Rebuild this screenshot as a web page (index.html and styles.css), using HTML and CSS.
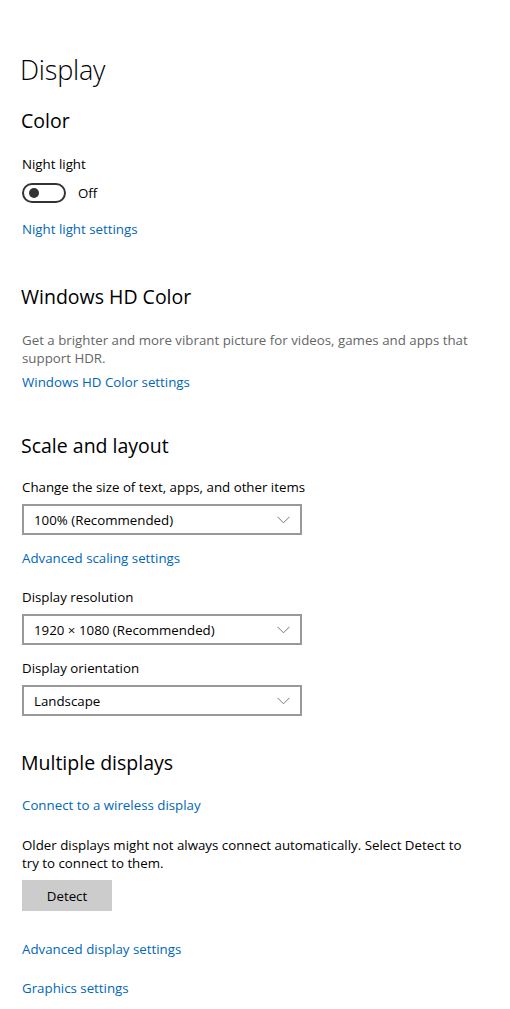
FILE: index.html
```html
<!DOCTYPE html>
<html lang="en">
<head>
    <meta charset="UTF-8">
    <meta name="viewport" content="width=device-width, initial-scale=1.0">
    <title>Display</title>
    <link rel="stylesheet" href="styles.css">
</head>
<body>
    <h1 class="page-title">Display</h1>

    <section class="group">
        <h2>Color</h2>
        <div class="label">Night light</div>
        <div class="toggle-row">
            <span class="toggle"><span class="knob"></span></span>
            <span class="toggle-state">Off</span>
        </div>
        <a class="link first-link" href="#">Night light settings</a>
    </section>

    <section class="group hd">
        <h2>Windows HD Color</h2>
        <p class="desc">Get a brighter and more vibrant picture for videos, games and apps that support HDR.</p>
        <a class="link" href="#">Windows HD Color settings</a>
    </section>

    <section class="group scale">
        <h2>Scale and layout</h2>
        <div class="label">Change the size of text, apps, and other items</div>
        <div class="select"><span>100% (Recommended)</span><svg width="13" height="8" viewBox="0 0 13 8"><path d="M0.5 0.8 L6.5 6.8 L12.5 0.8" fill="none" stroke="#777" stroke-width="1"/></svg></div>
        <a class="link after-select" href="#">Advanced scaling settings</a>
        <div class="label spaced">Display resolution</div>
        <div class="select"><span>1920 × 1080 (Recommended)</span><svg width="13" height="8" viewBox="0 0 13 8"><path d="M0.5 0.8 L6.5 6.8 L12.5 0.8" fill="none" stroke="#777" stroke-width="1"/></svg></div>
        <div class="label tight">Display orientation</div>
        <div class="select"><span>Landscape</span><svg width="13" height="8" viewBox="0 0 13 8"><path d="M0.5 0.8 L6.5 6.8 L12.5 0.8" fill="none" stroke="#777" stroke-width="1"/></svg></div>
    </section>

    <section class="group multi">
        <h2>Multiple displays</h2>
        <a class="link" href="#">Connect to a wireless display</a>
        <p class="note">Older displays might not always connect automatically. Select Detect to try to connect to them.</p>
        <button class="btn" type="button">Detect</button>
        <a class="link block-link" href="#">Advanced display settings</a>
        <a class="link block-link graphics" href="#">Graphics settings</a>
    </section>
</body>
</html>
```

FILE: styles.css
```css
body { margin: 0; padding: 0 0 0 22px; font-family: "Open Sans", "Noto Sans", sans-serif; font-size: 13.3px; color: #000; background: #fff; }
h1, h2, p { margin: 0; font-weight: 400; }
.page-title { font-size: 27px; font-weight: 300; margin: 52px 0 0 -2px; line-height: 36px; letter-spacing: -0.2px; }
h2 { font-size: 19.5px; line-height: 26px; margin-left: -1px; }
.group { margin-top: 20px; }
.label { margin-top: 21px; line-height: 18px; }
.toggle-row { display: flex; align-items: center; gap: 12px; margin-top: 10px; }
.toggle { height: 16px; border: 2px solid #333; border-radius: 10px; display: flex; align-items: center; padding-left: 5px; box-sizing: content-box; width: 35px; }
.knob { width: 10px; height: 10px; border-radius: 50%; background: #333; }
.toggle-state { line-height: 18px; }
.link { display: block; color: #0067b8; text-decoration: none; line-height: 18px; width: max-content; }
.first-link { margin-top: 17px; }
.hd { margin-top: 46px; }
.desc { color: #666; line-height: 18px; margin-top: 21px; padding-right: 30px; }
.hd .link { margin-top: 6px; }
.scale { margin-top: 42px; }
.scale .label { margin-top: 19px; }
.select { height: 27px; border: 2px solid #999; margin-top: 8px; display: flex; align-items: center; justify-content: space-between; padding: 0 10px; box-sizing: content-box; width: 256px; }
.select span { line-height: 18px; }
.after-select { margin-top: 14px; }
.scale .label.spaced { margin-top: 21px; }
.scale .label.tight { margin-top: 14px; }
.multi { margin-top: 34px; }
.multi .link { margin-top: 20px; }
.note { margin-top: 22px; line-height: 18px; padding-right: 30px; }
.btn { display: block; margin-top: 8px; width: 90px; height: 31px; border: 0; background: #ccc; font-family: inherit; font-size: 13.3px; color: #000; padding: 0; }
.multi .block-link { margin-top: 29px; }
.multi .graphics { margin-top: 21px; }
```
